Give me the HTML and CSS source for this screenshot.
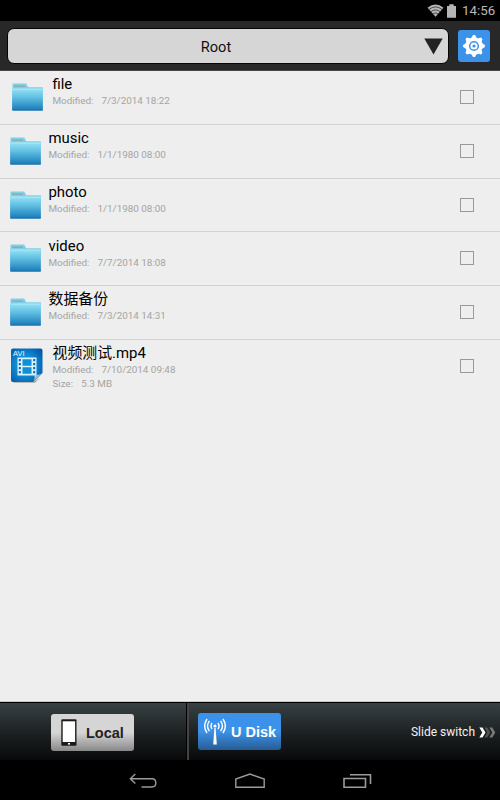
FILE: index.html
```html
<!DOCTYPE html>
<html lang="en">
<head>
  <meta charset="UTF-8">
  <meta name="viewport" content="width=device-width, initial-scale=1.0">
  <title>U Disk</title>
  <link rel="stylesheet" href="styles.css">
</head>
<body>
  <!-- shared icons -->
  <svg width="0" height="0" class="defs">
    <defs>
      <linearGradient id="folderFill" x1="0" y1="0" x2="0" y2="1">
        <stop offset="0" stop-color="#97e2f5"/>
        <stop offset="0.4" stop-color="#60bfe3"/>
        <stop offset="1" stop-color="#187ab8"/>
      </linearGradient>
      <symbol id="folder" viewBox="0 0 32 28">
        <path d="M0.5 5V1.2Q0.5 0.5 1.2 0.5H14.2L16.2 4.3H30.3Q31 4.3 31 5V12H0.5z" fill="#7fd0e6"/>
        <path d="M2 3.2H13" stroke="#91a2a8" stroke-width="1.2"/>
        <rect x="0.1" y="5.5" width="30.8" height="22" rx="0.8" fill="url(#folderFill)"/>
        <path d="M0.8 6.2H30.4" stroke="#a9ecf8" stroke-width="0.8"/>
        <path d="M0.5 27.2H30.8" stroke="#1b6ca4" stroke-width="0.7"/>
      </symbol>
    </defs>
  </svg>

  <div class="statusbar">
    <svg class="wifi" width="17" height="13" viewBox="0 0 17 13">
      <path d="M0.5 3.7Q8.5 -2.9 16.5 3.7L8.5 12.8z" fill="#b5b5b5"/>
      <path d="M1.9 5.5Q8.5 0.3 15.1 5.5M3.9 7.7Q8.5 4.2 13.1 7.7M5.8 9.9Q8.5 7.9 11.2 9.9" fill="none" stroke="#000" stroke-width="0.6"/>
    </svg>
    <svg class="battery" width="9" height="14" viewBox="0 0 9 14">
      <path d="M0 2H2.3V0.3H6.7V2H9V13.7H0z" fill="#b5b5b5"/>
    </svg>
    <span class="clock">14:56</span>
  </div>

  <header class="topbar">
    <div class="path">
      <span>Root</span>
      <svg class="arrow" width="19" height="17" viewBox="0 0 19 17">
        <path d="M0.3 0.5H18.7L9.5 16.5z" fill="#222"/>
      </svg>
    </div>
    <div class="settings">
      <svg width="24" height="24" viewBox="-12 -12 24 24">
        <g fill="#fff">
          <circle r="8.7"/>
          <g id="teeth">
            <path id="tooth" d="M-2.7 -8L-1 -10.9H1L2.7 -8z"/>
            <use href="#tooth" transform="rotate(90)"/>
            <use href="#tooth" transform="rotate(180)"/>
            <use href="#tooth" transform="rotate(270)"/>
          </g>
          <use href="#teeth" transform="rotate(45)"/>
        </g>
        <circle r="4.3" fill="none" stroke="#3c92e8" stroke-width="1.5"/>
        <circle r="1.6" fill="#3c92e8"/>
      </svg>
    </div>
  </header>

  <main class="list">
    <div class="row wide">
      <svg class="icon"><use href="#folder"/></svg>
      <div class="info">
        <div class="name">file</div>
        <div class="meta"><span>Modified:</span><span>7/3/2014 18:22</span></div>
      </div>
      <div class="check"></div>
    </div>
    <div class="row">
      <svg class="icon"><use href="#folder"/></svg>
      <div class="info">
        <div class="name">music</div>
        <div class="meta"><span>Modified:</span><span>1/1/1980 08:00</span></div>
      </div>
      <div class="check"></div>
    </div>
    <div class="row">
      <svg class="icon"><use href="#folder"/></svg>
      <div class="info">
        <div class="name">photo</div>
        <div class="meta"><span>Modified:</span><span>1/1/1980 08:00</span></div>
      </div>
      <div class="check"></div>
    </div>
    <div class="row">
      <svg class="icon"><use href="#folder"/></svg>
      <div class="info">
        <div class="name">video</div>
        <div class="meta"><span>Modified:</span><span>7/7/2014 18:08</span></div>
      </div>
      <div class="check"></div>
    </div>
    <div class="row">
      <svg class="icon"><use href="#folder"/></svg>
      <div class="info">
        <div class="name">数据备份</div>
        <div class="meta"><span>Modified:</span><span>7/3/2014 14:31</span></div>
      </div>
      <div class="check"></div>
    </div>
    <div class="row wide last">
      <svg class="icon movie" viewBox="0 0 32 36">
        <defs>
          <radialGradient id="movieFill" cx="0.45" cy="0.5" r="0.7">
            <stop offset="0" stop-color="#18b4ee"/>
            <stop offset="0.55" stop-color="#0c80cc"/>
            <stop offset="1" stop-color="#0752a0"/>
          </radialGradient>
          <linearGradient id="curl" x1="0" y1="0" x2="1" y2="1">
            <stop offset="0" stop-color="#f4f9fc"/>
            <stop offset="0.6" stop-color="#7196b0"/>
          </linearGradient>
        </defs>
        <path d="M2 34H22L29 30L24 34.8H3z" fill="#a9a9a9"/>
        <path d="M2 0.5H29.5Q31.5 0.5 31.5 2.5V25L22.5 34H2Q0 34 0 32V2.5Q0 0.5 2 0.5z" fill="url(#movieFill)"/>
        <text x="2" y="8" class="avi">AVI</text>
        <path d="M6.5 9.5H25.5V27.5H6.5z" fill="#d9f3fc"/>
        <path d="M11.5 11.3H20.5V17.7H11.5zM11.5 19.3H20.5V25.7H11.5z" fill="#128fd6"/>
        <path d="M8.8 11V27M23.2 11V27" stroke="#0b69b4" stroke-width="2" stroke-dasharray="2.2 1.8"/>
        <path d="M22.5 34Q24.3 30 23.5 26.8Q28 27.4 31.5 25z" fill="url(#curl)"/>
      </svg>
      <div class="info">
        <div class="name">视频测试.mp4</div>
        <div class="meta"><span>Modified:</span><span>7/10/2014 09:48</span></div>
        <div class="meta size"><span>Size:</span><span>5.3 MB</span></div>
      </div>
      <div class="check"></div>
    </div>
  </main>

  <footer class="tabs">
    <div class="tab local">
      <div class="btn btn-grey">
        <svg width="16" height="27" viewBox="0 0 16 27">
          <rect x="0.3" y="0.3" width="15.2" height="26.4" rx="1" fill="#1b1b1b"/>
          <rect x="1.7" y="2.3" width="12.4" height="20.7" fill="#fff"/>
          <rect x="7" y="24" width="2" height="1.6" fill="#fff"/>
        </svg>
        <span>Local</span>
      </div>
    </div>
    <div class="tab udisk">
      <div class="btn btn-blue">
        <svg width="22" height="27" viewBox="0 0 22 27">
          <circle cx="11" cy="8" r="1.6" fill="#fff"/>
          <path d="M10.4 10H11.6L12.8 26.5H9.2z" fill="#fff"/>
          <path d="M8 5Q6 8 8 11M14 5Q16 8 14 11M5.4 2.8Q1.7 8 5.4 13.2M16.6 2.8Q20.3 8 16.6 13.2M3 1Q-1.6 8 3 15M19 1Q23.6 8 19 15" fill="none" stroke="#fff" stroke-width="1.4"/>
        </svg>
        <span>U Disk</span>
      </div>
      <div class="slide">
        <span>Slide switch</span>
        <svg width="17" height="11" viewBox="0 0 17 11">
          <path d="M5.3 0.5H8.3L11.3 5.5L8.3 10.5H5.3L8.3 5.5z" fill="#4e5152"/>
          <path d="M10.3 0.5H13.3L16.3 5.5L13.3 10.5H10.3L13.3 5.5z" fill="#777a7b"/>
          <path d="M0.3 0.5H3.5L6.5 5.5L3.5 10.5H0.3L3.3 5.5z" fill="#fff"/>
        </svg>
      </div>
    </div>
  </footer>

  <nav class="navbar">
    <svg width="28" height="16" viewBox="0 0 28 16">
      <path d="M6.3 1L1.3 5.7L6.3 10.5M1.5 5.7H23Q26.8 5.7 26.8 9.8Q26.8 14 23 14H12.5" fill="none" stroke="#9b9b9b" stroke-width="1.4"/>
    </svg>
    <svg width="30" height="16" viewBox="0 0 30 16">
      <path d="M0.8 14.3V6L15 1.1L29.2 6V14.3z" fill="none" stroke="#9b9b9b" stroke-width="1.4"/>
    </svg>
    <svg width="29" height="16" viewBox="0 0 29 16">
      <path d="M1 5.5H22.5V14.2H1zM7 1.8H27.5V11" fill="none" stroke="#9b9b9b" stroke-width="1.6"/>
    </svg>
  </nav>
</body>
</html>
```
FILE: styles.css
```css
* {
  box-sizing: border-box;
}

body {
  margin: 0;
  height: 800px;
  display: flex;
  flex-direction: column;
  overflow: hidden;
  background: #000;
  font-family: Roboto, "Noto Sans CJK SC", sans-serif;
}

svg {
  display: block;
  flex: none;
}

.defs {
  position: absolute;
}

/* status bar */
.statusbar {
  height: 21px;
  display: flex;
  justify-content: flex-end;
  align-items: center;
  padding-right: 5px;
  background: #000;
}

.battery {
  margin-left: 3px;
}

.clock {
  width: 33px;
  margin-left: 6px;
  font-size: 13.3px;
  line-height: 20px;
  color: #b9b9b9;
}

/* top bar */
.topbar {
  height: 50px;
  display: flex;
  padding: 7px 9px 0 7px;
  background: #282828;
  border-bottom: 1px solid #4a4648;
}

.path {
  width: 442px;
  height: 36px;
  display: flex;
  align-items: center;
  border: 1px solid #050505;
  border-radius: 7px;
  background: #d6d6d6;
  color: #111;
  font-size: 14.6px;
}

.path span {
  flex: 1;
  padding-top: 1px;
  text-align: center;
}

.arrow {
  margin: 0 5px 0 0;
}

.settings {
  width: 32px;
  height: 32px;
  margin: 2px 0 0 9px;
  display: flex;
  align-items: center;
  justify-content: center;
  border-radius: 3px;
  background: #3c92e8;
}

/* file list */
.list {
  height: 631px;
  background: #eee;
  border-bottom: 1px solid #c8c8c8;
}

.row {
  height: 53.75px;
  display: flex;
  padding: 0 26px 0 10px;
  border-bottom: 1px solid #d2d2d2;
}

.row.wide {
  padding-left: 12px;
}

.row.last {
  border-bottom: none;
}

.icon {
  width: 32px;
  height: 28px;
  margin-top: 12px;
}

.icon.movie {
  height: 36px;
  margin: 8px 0 0 -1px;
}

.avi {
  font: 7.5px "Liberation Sans", sans-serif;
  fill: #e8f8ff;
}

.info {
  flex: 1;
  padding: 4.4px 0 0 6.5px;
}

.wide .info {
  padding-left: 8.5px;
}

.last .info {
  padding-left: 9.5px;
}

.name {
  height: 19px;
  font-size: 14.9px;
  line-height: 19px;
  color: #000;
}

.meta {
  height: 14px;
  display: flex;
  gap: 8px;
  font-size: 9.9px;
  line-height: 14px;
  color: #a4a4a4;
}

.check {
  width: 14px;
  height: 14px;
  margin-top: 19px;
  border: 1px solid #999;
}

/* bottom tabs */
.tabs {
  height: 58px;
  display: flex;
  border-top: 1px solid #000;
  background: linear-gradient(#384144, #1e2223 50%, #08090a);
}

.local {
  width: 189px;
  padding: 11px 0 0 51px;
  border-right: 2px solid #444;
  box-shadow: inset -1px 0 #000;
}

.udisk {
  flex: 1;
  display: flex;
  justify-content: space-between;
  padding: 10px 4px 0 9px;
}

.btn {
  width: 83px;
  height: 37px;
  display: flex;
  align-items: center;
  border-radius: 3px;
  font: bold 14.5px "Liberation Sans", sans-serif;
}

.btn-grey {
  padding-left: 10px;
  gap: 9px;
  background: linear-gradient(#d5d5d5 50%, #888);
  color: #222;
}

.btn-blue {
  padding-left: 6px;
  gap: 5px;
  background: linear-gradient(#3c92e8 50%, #265c94);
  color: #fff;
}

.slide {
  height: 38px;
  display: flex;
  align-items: center;
  gap: 4px;
  color: #f2f2f2;
  font-size: 12px;
}

/* android navigation */
.navbar {
  height: 40px;
  display: flex;
  justify-content: center;
  gap: 78px;
  padding-top: 13px;
  background: #000;
}
```
